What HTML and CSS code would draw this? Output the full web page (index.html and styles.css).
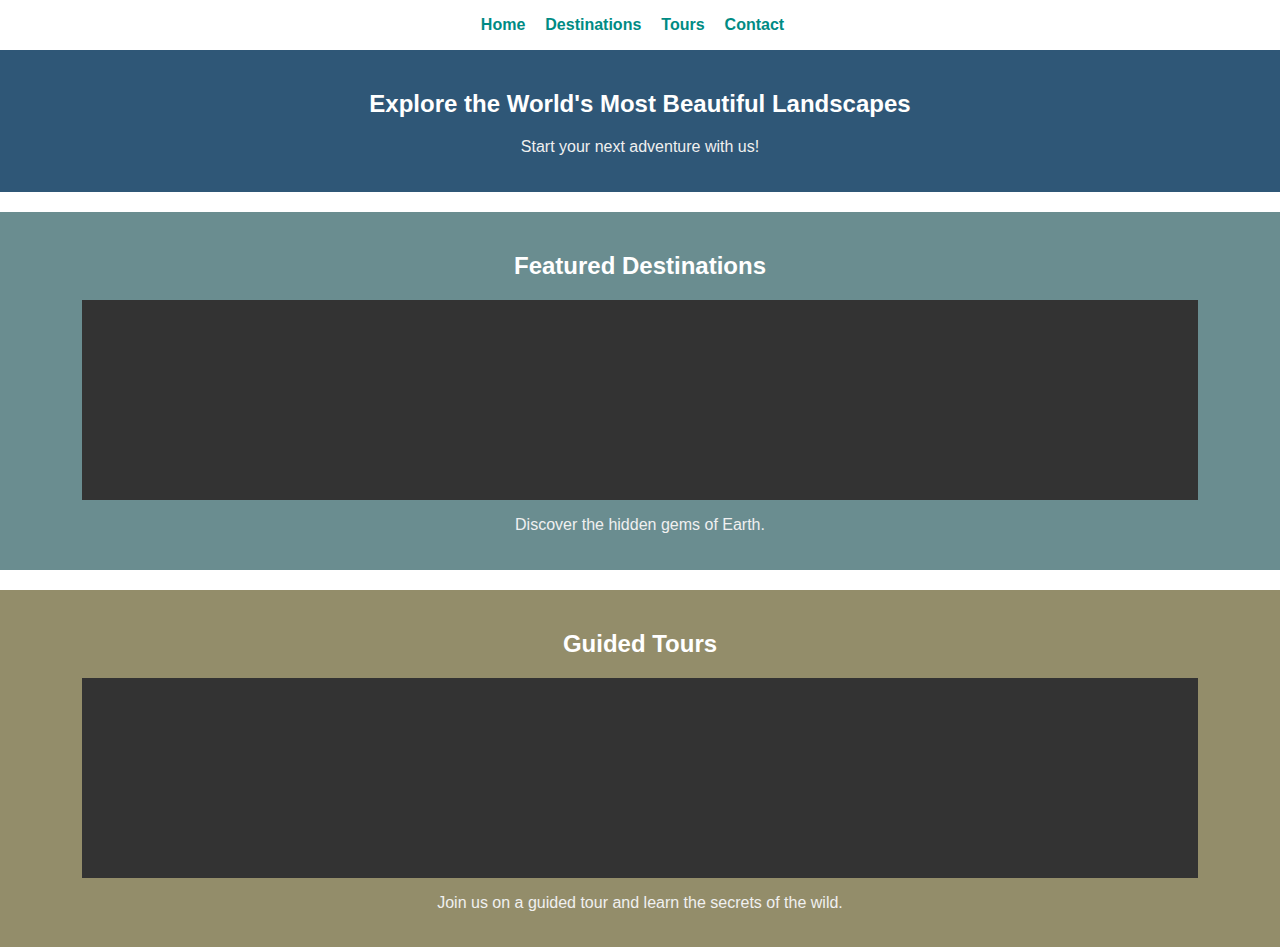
FILE: index.html
```html
<!DOCTYPE html>
<html lang="en">
<head>
<meta charset="utf-8">
<title>Explore the World</title>
<link rel="stylesheet" href="styles.css">
</head>
<body>
<nav class="nav">
  <a href="#" class="nav-link">Home</a>
  <a href="#" class="nav-link">Destinations</a>
  <a href="#" class="nav-link">Tours</a>
  <a href="#" class="nav-link">Contact</a>
</nav>
<header class="hero">
  <h1 class="hero-title">Explore the World's Most Beautiful Landscapes</h1>
  <p class="hero-sub">Start your next adventure with us!</p>
</header>
<section class="section section-dest">
  <h2 class="section-title">Featured Destinations</h2>
  <div class="media"></div>
  <p class="caption">Discover the hidden gems of Earth.</p>
</section>
<section class="section section-tours">
  <h2 class="section-title">Guided Tours</h2>
  <div class="media"></div>
  <p class="caption">Join us on a guided tour and learn the secrets of the wild.</p>
</section>
</body>
</html>
```
FILE: styles.css
```css
* { box-sizing: border-box; }
body {
  margin: 0;
  font-family: "Liberation Sans", Arial, sans-serif;
  background: #fff;
  color: #f0f0f0;
}
.nav {
  height: 50px;
  padding: 16px 15px 0 0;
  display: flex;
  justify-content: center;
  gap: 20px;
  background: #fff;
}
.nav-link {
  color: #008b84;
  font-weight: bold;
  font-size: 16px;
  text-decoration: none;
  line-height: 18.4px;
}
.hero {
  background: #2f5777;
  text-align: center;
  padding: 40px 20px 20px;
}
.hero-title {
  margin: 0 0 20px;
  font-size: 24px;
  line-height: 27.6px;
  color: #fff;
}
.hero-sub {
  margin: 0 0 16px;
  font-size: 16px;
  line-height: 18.4px;
}
.section {
  margin-top: 20px;
  padding: 40px 20px 20px;
  text-align: center;
}
.section-dest { background: #6a8d90; }
.section-tours { background: #938d6a; }
.section-title {
  margin: 0 0 20px;
  font-size: 24px;
  line-height: 27.6px;
  color: #fff;
}
.media {
  width: 90%;
  height: 200px;
  margin: 0 auto;
  background: #333;
}
.caption {
  margin: 16px 0;
  font-size: 16px;
  line-height: 18.4px;
}
```
